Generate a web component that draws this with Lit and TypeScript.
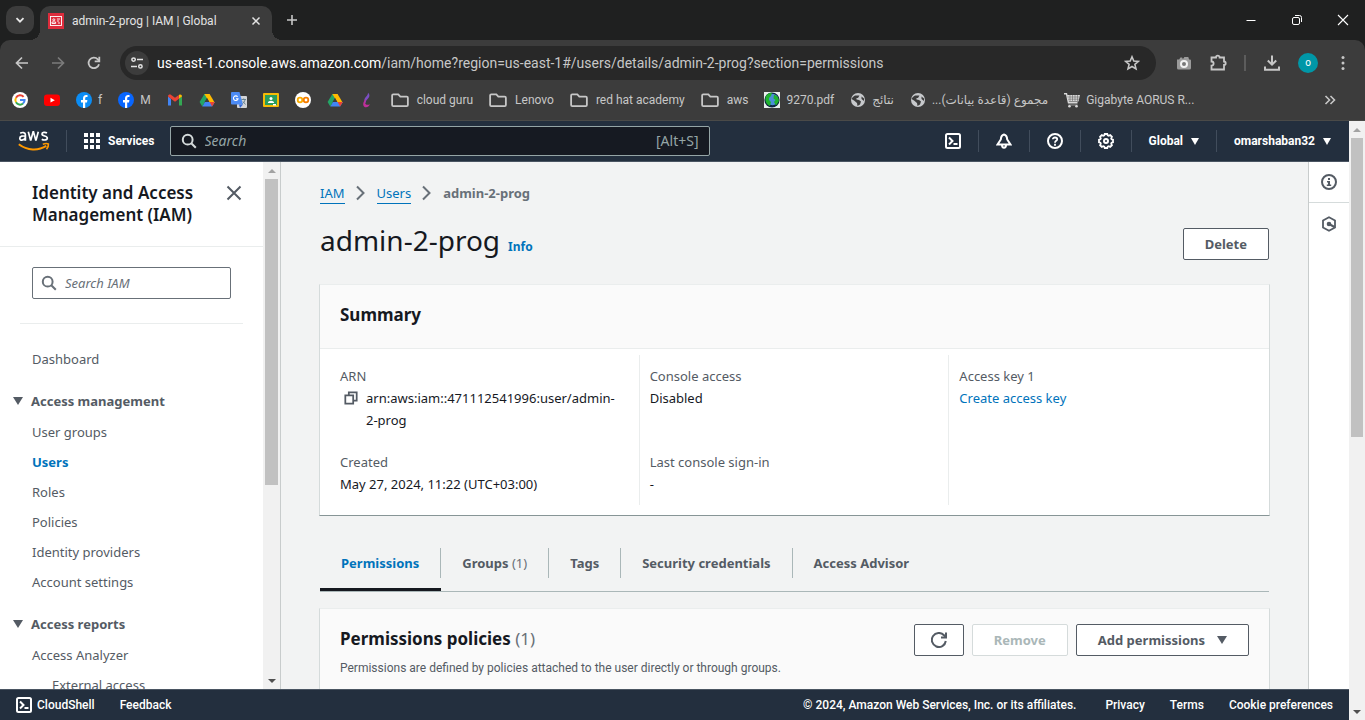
import { LitElement, html, svg, css, nothing } from "lit";
import { customElement, property } from "lit/decorators.js";

const shape = (content: unknown, size = 16, box = 16) =>
  html`<svg width=${size} height=${size} viewBox="0 0 ${box} ${box}" fill="none" aria-hidden="true">${content}</svg>`;

const line = (d: string, width = 2, color = "currentColor") =>
  svg`<path d=${d} stroke=${color} stroke-width=${width} fill="none"/>`;

const fill = (d: string, color = "currentColor") => svg`<path d=${d} fill=${color}/>`;

const icons = {
  chevronDown: () => shape(line("M4.5 6.2 8 9.7l3.5-3.5", 1.8)),
  close: () => shape(line("M4.5 4.5l7 7M11.5 4.5l-7 7", 1.5)),
  plus: () => shape(line("M8 3v10M3 8h10", 1.6)),
  minimize: () => shape(line("M3.5 8.5h9", 1)),
  restore: () =>
    shape(svg`<rect x="3.5" y="5.5" width="7" height="7" rx="1.5" stroke="currentColor"/>${line("M6 3.5h4.5a2 2 0 0 1 2 2V10", 1)}`),
  windowClose: () => shape(line("M3 3l10 10M13 3L3 13", 1.1)),
  back: () => shape(line("M14 8H3M8 2.5 2.5 8 8 13.5", 1.7)),
  forward: () => shape(line("M2 8h11M8 2.5 13.5 8 8 13.5", 1.7)),
  reload: () => shape(svg`${line("M13 9.2A5.3 5.3 0 1 1 11.8 4.3L13.2 5.8", 1.8)}${line("M13.3 1.8v4.6H8.7", 1.8)}`),
  tune: () =>
    shape(svg`<circle cx="4.6" cy="4.6" r="1.7" stroke="currentColor" stroke-width="1.5"/><circle cx="11.4" cy="11.4" r="1.7" stroke="currentColor" stroke-width="1.5"/>${line("M8 4.6h6M2 11.4h6", 1.5)}`),
  star: () => shape(line("M8 1.8 9.8 6l4.6.4-3.5 3 1.1 4.5L8 11.5l-4 2.4 1.1-4.5-3.5-3L6.200 6z", 1.6)),
  camera: () =>
    shape(svg`<path d="M1 4.500h2.200L4.400 2.500h1.800v1h1.300l.8-1.500h4l.8 2.500H14a1 1 0 0 1 1 1V13a1.500 1.500 0 0 1-1.500 1.500h-11A1.500 1.500 0 0 1 1 13z" fill="#9b9b9b"/><circle cx="8" cy="9" r="3" stroke="#f1f1f1" stroke-width="2" fill="#777"/>`),
  puzzle: () =>
    shape(line("M2.500 3.500H7a1.800 1.800 0 0 1 3.600 0H15v4a1.500 1.500 0 0 1 0 3.400V15.500H2.500v-3.800a2.100 2.100 0 0 0 0-4.200z", 1.8), 18, 18),
  download: () => shape(svg`${line("M9 1.500v9M4.800 6.500 9 10.700l4.200-4.200", 2)}${line("M2 12.500v3.300h14v-3.300", 2)}`, 18, 18),
  dots: () => shape(svg`<circle cx="8" cy="2.500" r="1.500" fill="currentColor"/><circle cx="8" cy="8" r="1.500" fill="currentColor"/><circle cx="8" cy="13.500" r="1.500" fill="currentColor"/>`),
  more: () => shape(line("M3.500 4l4 4-4 4M8.500 4l4 4-4 4", 1.6)),
  iam: () =>
    shape(svg`<rect width="16" height="16" fill="#dd2c3c"/><rect x="2.500" y="3.500" width="11" height="9" stroke="#fff" stroke-width=".9"/><circle cx="5.800" cy="6.800" r="1" stroke="#fff" stroke-width=".9"/><path d="M4 10.500V9h3.600v1.500zM9 6h3M9 8h2M10 10h2" stroke="#fff" stroke-width=".9"/>`),
  google: () =>
    shape(svg`<circle cx="8" cy="8" r="8" fill="#fff"/>${line("M11.600 4.900A4.600 4.600 0 0 0 4 5.700", 2, "#ea4335")}${line("M4 5.700a4.600 4.600 0 0 0 0 4.600", 2, "#fbbc05")}${line("M4 10.300a4.600 4.600 0 0 0 7 1.200", 2, "#34a853")}${line("M8 8h4.600a4.600 4.600 0 0 1-1.600 3.500", 2, "#4285f4")}`),
  youtube: () => shape(svg`<rect y="2.500" width="16" height="11.500" rx="3" fill="#f00"/>${fill("M6.500 5.800 10.800 8.200 6.500 10.600z", "#fff")}`),
  facebook: (color: string) =>
    shape(svg`<circle cx="8" cy="8" r="8" fill=${color}/>${fill("M7 16v-5.500H5V8h2V6.500C7 4.200 8.200 3 10.200 3c.7 0 1.300.1 1.300.1v2h-1c-1 0-1.300.6-1.300 1.300V8h2.200l-.4 2.500H9.200V16z", "#fff")}`),
  gmail: () =>
    shape(svg`${fill("M1 13.500V4.500l3 2.300v6.700z", "#4285f4")}${fill("M12 13.500V6.800l3-2.300v9z", "#34a853")}${fill("M1 4.500C1 2.500 3 2 4.200 3L8 5.800 11.800 3 12 6.800 8 9.800 1 4.600z", "#ea4335")}${fill("M12 6.800V2.900c1.500-.9 3-.2 3 1.600z", "#fbbc04")}`),
  drive: () =>
    shape(svg`${fill("M5.400 2h5.200L6 10 3.300 14.500.6 10z", "#23a566")}${fill("M5.400 2h5.200l5 8.500h-5.200z", "#ffba00")}${fill("M3.300 14.500 6 10h9.800l-2.700 4.500z", "#4285f4")}${fill("M13.100 14.500 10.600 10h5.200z", "#ea4335")}${fill("M8 5.800 10.400 10H5.600z", "#3c3c3c")}`),
  translate: () =>
    shape(svg`<rect x="6" y="4" width="10" height="12" rx="1" fill="#d3d5d8"/>${fill("M0 1a1 1 0 0 1 1-1h7.500l3.500 12.500H1a1 1 0 0 1-1-1z", "#4c8bf5")}${fill("M8 12.500h4L9 16z", "#3367d6")}${line("M6.600 4.800a2.300 2.300 0 1 0 .4 2H5", 1.1, "#fff")}${line("M10.500 7.500h4.500M12.700 6.500v1M14 7.500c-.2 2-1.500 3.500-2.500 4M12 9.500l2.500 3", .9, "#607d8b")}`),
  classroom: () =>
    shape(svg`<rect y="1" width="16" height="14" rx="1" fill="#f6bb06"/><rect x="2" y="3" width="12" height="10" fill="#2a9d5c"/><circle cx="8" cy="6.500" r="1.500" fill="#fff"/>${fill("M4.800 11c.4-3 6-3 6.400 0zM10 12h3v1.500h-3z", "#fff")}`),
  colab: () =>
    shape(svg`<circle cx="8" cy="8" r="8" fill="#fff"/><circle cx="5" cy="8" r="2.300" stroke="#f9ab00" stroke-width="1.800"/><circle cx="11" cy="8" r="2.300" stroke="#f57c00" stroke-width="1.800"/>`),
  plume: () => shape(svg`${fill("M9 .8c2.200 2 1.600 4.300-.4 6.200C7.200 8.500 6.500 9.500 7 11 4.500 9.500 5.200 6.800 6.800 5 8.200 3.600 9 2.600 9 .8z", "#7b4fc4")}${fill("M7.500 7C4 8.500 3 14 6 15.200c2 .6 3.800-.5 5-2.900-2.200.9-4.300.7-4.700-1C6 10 6.800 8.800 7.500 7z", "#c02f9a")}`),
  folder: () => shape(line("M2 3h4.500l1.800 2H14a1 1 0 0 1 1 1v6.500a1 1 0 0 1-1 1H2a1 1 0 0 1-1-1V4a1 1 0 0 1 1-1z", 1.6), 18),
  earth: () =>
    shape(svg`<rect width="16" height="16" fill="#e8f0ee"/><circle cx="8" cy="8" r="7.600" fill="#0d2440"/><circle cx="8.500" cy="7.500" r="5.800" fill="#4a8fd8"/>${fill("M2 4c2-3 5-3.500 6-3L7 4 5 6v2l2 2-1 4C3 13 0 9 2 4zM10 2.500l4 2.500 1 4-3 4.500-2-3.500 1.500-2-2-1.500z", "#1fb32f")}`),
  globe: () =>
    shape(svg`<circle cx="8" cy="8" r="7" fill="#c7c9cc"/>${fill("M5 3.500h4.500L8 6H6.500v1.500L9 8l2 1.500-1 3L7.500 14l-.5-3L4 8.500 1.500 7A6.500 6.500 0 0 1 5 3.500zM11.500 4.500l2.500 2V9l-2.500-2z", "#3c3c3c")}`),
  cart: () =>
    shape(svg`${line("M0 1.800h2.500l2 9h9", 1.4, "#d9d9d9")}${fill("M3 3h13l-1.500 6.500H4.500z", "#d9d9d9")}${line("M6 3v6M8.500 3v6M11 3v6M13.500 3v6M3.500 5h12M4 7.200h11", .5, "#555")}${line("M4.500 13h9", 1, "#999")}<circle cx="5.500" cy="14.300" r="1.300" fill="#d9d9d9"/><circle cx="12.500" cy="14.300" r="1.300" fill="#d9d9d9"/>`),
  aws: () => html`<svg width="32" height="22" viewBox="0 0 32 22" fill="none" aria-hidden="true">
    <path d="M2.200 3.200c2-1.200 5.200-.9 5.200 1.500v6M7.200 6.300c-2-.6-5.400-.4-5.400 2 0 2.500 4 2.600 5.400-.4M10.300 1.800l2.200 8.200h.4l2.200-8.200h.4l2.200 8.200h.4l2.200-8.200M29 3c-1.800-1-5-.9-5 1.100 0 2.500 5.300 1.300 5.300 3.900 0 2.400-3.800 2.400-5.500 1.200" stroke="#fff" stroke-width="1.700"/>
    <path d="M.8 14.200c8.500 6.500 19.500 6.800 27.500 1.700" stroke="#f90" stroke-width="2"/>
    <path d="M24.800 14.200c2.500-.9 4.500-.9 5.600-.2.200 1.500-.4 3.500-1.900 5.300" stroke="#f90" stroke-width="1.600"/>
  </svg>`,
  apps: () =>
    shape([1, 7, 13].map((y) => [1, 7, 13].map((x) => svg`<rect x=${x - 1} y=${y - 1} width="4" height="4" fill="currentColor"/>`))),
  search: () => shape(svg`<circle cx="6.700" cy="6.700" r="4.900" stroke="currentColor" stroke-width="2"/>${line("M10.300 10.300l4.500 4.500")}`),
  shell: () => shape(svg`<rect x="1" y="1" width="14" height="14" rx="1.500" stroke="currentColor" stroke-width="2"/>${line("M4 4.500 7.500 8 4 11.500M8.500 11h4")}`),
  bell: () => shape(svg`${line("M8 1.500C5.500 2 5 4 4.800 6.500L1.500 11.500h13L11.200 6.500C11 4 10.500 2 8 1.500z")}${line("M6 12c0 3.500 4 3.500 4 0")}`),
  help: () => shape(svg`<circle cx="8" cy="8" r="7" stroke="currentColor" stroke-width="2"/>${line("M5.800 6.300C5.800 3.800 10.200 4 10.200 6.300 10.200 8 8 7.700 8 9.800M8 10.800v2", 1.8)}`),
  gear: () =>
    shape(svg`${line("M6.700 1h2.600l.4 1.400 1 .4 1.500-.7 1.700 1.700-.7 1.500.4 1L15 6.700v2.600l-1.400.4-.4 1 .7 1.500-1.700 1.700-1.500-.7-1 .4L9.300 15H6.700l-.4-1.400-1-.4-1.500.7-1.700-1.700.7-1.500-.4-1L1 9.300V6.700l1.400-.4.4-1-.7-1.500 1.700-1.700 1.500.7 1-.4z", 1.800)}<circle cx="8" cy="8" r="2" stroke="currentColor" stroke-width="2"/>`),
  info: () => shape(svg`<circle cx="8" cy="8" r="7" stroke="currentColor" stroke-width="2"/>${fill("M7 4h2v2H7zM6 7h3v3.500h1.200V12H5.800v-1.500H7v-2H6z")}`),
  hexagon: () => shape(svg`${line("M8 1.200 14 4.500v7L8 14.800 2 11.500v-7z", 1.8)}<circle cx="8" cy="8" r="2.300" fill="currentColor"/>${line("M8 8l5.500 3")}`),
  bigClose: () => shape(line("M1.500 1.500l13 13M14.500 1.500l-13 13")),
  angle: () => shape(line("M4 1.500 10.500 8 4 14.500")),
  caret: () => shape(fill("M0 1h10L5 9z"), 10, 10),
  smallCaret: () => shape(fill("M0 1h8L4 8z"), 8, 8),
  copy: () => shape(line("M1.500 5h9v9.500h-9zM5.500 5V1.500h9V11h-4")),
  refresh: () => shape(svg`${line("M14.800 9A7 7 0 1 1 13 3.200L14.500 4.800")}${line("M15 .5v5h-5")}`),
  up: () => shape(fill("M4 10h8L8 6z"), 16),
  down: () => shape(fill("M4 6h8l-4 4z"), 16),
};

const reset = css`
  *, *::before, *::after { box-sizing: border-box; }
  svg { display: block; flex: none; }
  button { font: inherit; color: inherit; background: none; border: 0; padding: 0; margin: 0; }
  a { color: inherit; text-decoration: none; }
  input { font: inherit; color: inherit; background: none; border: 0; padding: 0; min-width: 0; outline: none; }
`;

@customElement("scroll-track")
class ScrollTrack extends LitElement {
  @property({ type: Number }) size = 50;
  static styles = [reset, css`
    :host { display: flex; flex: none; flex-direction: column; width: 16px; background: #f1f1f1; }
    .arrow { display: flex; align-items: center; justify-content: center; height: 17px; flex: none; color: #a3a3a3; }
    .arrow.down { color: #505050; }
    .rail { flex: 1; padding: 0 2px; }
    .thumb { background: #c1c1c1; }
  `];
  render() {
    return html`
      <div class="arrow">${icons.up()}</div>
      <div class="rail"><div class="thumb" style="height:${this.size}%"></div></div>
      <div class="arrow down">${icons.down()}</div>`;
  }
}

interface Mark { icon: () => unknown; text?: string; rtl?: boolean; folder?: boolean; }
const marks: Mark[] = [
  { icon: icons.google },
  { icon: icons.youtube },
  { icon: () => icons.facebook("#0b8df5"), text: "f" },
  { icon: () => icons.facebook("#0866ff"), text: "M" },
  { icon: icons.gmail },
  { icon: icons.drive },
  { icon: icons.translate },
  { icon: icons.classroom },
  { icon: icons.colab },
  { icon: icons.drive },
  { icon: icons.plume },
  { icon: icons.folder, text: "cloud guru", folder: true },
  { icon: icons.folder, text: "Lenovo", folder: true },
  { icon: icons.folder, text: "red hat academy", folder: true },
  { icon: icons.folder, text: "aws", folder: true },
  { icon: icons.earth, text: "9270.pdf" },
  { icon: icons.globe, text: "نتائج", rtl: true },
  { icon: icons.globe, text: "مجموع (قاعدة بيانات)...", rtl: true },
  { icon: icons.cart, text: "Gigabyte AORUS R..." },
];

@customElement("browser-frame")
class BrowserFrame extends LitElement {
  static styles = [reset, css`
    :host { display: block; flex: none; background: #1f2020; color: #c7c7c7; font: 12px/16px Roboto, "DejaVu Sans", sans-serif; }
    .strip { display: flex; align-items: center; height: 40px; padding: 0 6px; gap: 6px; }
    .tabs-menu { display: grid; place-items: center; width: 28px; height: 28px; border-radius: 10px; background: #3c3c3c; color: #e8e8e8; }
    .tab { position: relative; display: flex; align-items: center; gap: 8px; align-self: flex-end; width: 232px; height: 34px; padding: 0 8px 4px; border-radius: 10px 10px 0 0; background: #3c3c3c; color: #e3e3e3; }
    .tab::before, .tab::after { content: ""; position: absolute; bottom: 0; width: 10px; height: 10px; }
    .tab::before { right: 100%; background: radial-gradient(circle at 0 0, transparent 10px, #3c3c3c 10px); }
    .tab::after { left: 100%; background: radial-gradient(circle at 100% 0, transparent 10px, #3c3c3c 10px); }
    .tab-title { flex: 1; white-space: nowrap; }
    .new-tab { margin-left: 6px; }
    .window { display: flex; gap: 30px; margin-left: auto; padding-right: 8px; color: #fff; }
    .toolbar { display: flex; align-items: center; height: 46px; padding: 0 14px; background: #3c3c3c; border-radius: 10px 10px 0 0; }
    .nav { display: flex; gap: 20px; padding-right: 18px; }
    .nav .off { color: #7b7b7b; }
    .omnibox { display: flex; flex: 1; align-items: center; gap: 8px; height: 34px; padding: 0 16px 0 5px; border-radius: 17px; background: #282828; }
    .site { display: grid; place-items: center; width: 24px; height: 24px; border-radius: 12px; background: #3c3c3c; color: #e3e3e3; }
    .url { flex: 1; font-size: 14px; line-height: 18px; white-space: nowrap; overflow: hidden; color: #c7c7c7; }
    .host { color: #fff; }
    .tools { display: flex; align-items: center; gap: 17px; padding-left: 20px; }
    .rule { width: 2px; height: 16px; background: #5c5c5c; }
    .avatar { display: grid; place-items: center; width: 20px; height: 20px; border-radius: 10px; background: #0097a7; color: #fff; font-size: 10px; }
    .marks { display: flex; align-items: center; gap: 16px; height: 35px; padding: 0 27px 6px 12px; background: #3c3c3c; border-bottom: 1px solid #4a4a48; }
    .mark { display: flex; align-items: center; gap: 6px; white-space: nowrap; }
    .mark.folder { gap: 8px; }
    .more { margin-left: auto; }
  `];
  render() {
    return html`
      <div class="strip">
        <button class="tabs-menu" aria-label="Search tabs">${icons.chevronDown()}</button>
        <div class="tab">${icons.iam()}<span class="tab-title">admin-2-prog | IAM | Global</span>
          <button aria-label="Close tab">${icons.close()}</button></div>
        <button class="new-tab" aria-label="New tab">${icons.plus()}</button>
        <div class="window">
          <button aria-label="Minimize">${icons.minimize()}</button>
          <button aria-label="Restore">${icons.restore()}</button>
          <button aria-label="Close window">${icons.windowClose()}</button>
        </div>
      </div>
      <div class="toolbar">
        <div class="nav">
          <button aria-label="Back">${icons.back()}</button>
          <button class="off" aria-label="Forward">${icons.forward()}</button>
          <button aria-label="Reload">${icons.reload()}</button>
        </div>
        <div class="omnibox">
          <button class="site" aria-label="Site information">${icons.tune()}</button>
          <div class="url"><span class="host">us-east-1.console.aws.amazon.com</span>/iam/home?region=us-east-1#/users/details/admin-2-prog?section=permissions</div>
          <button aria-label="Bookmark this page">${icons.star()}</button>
        </div>
        <div class="tools">
          <button aria-label="Capture">${icons.camera()}</button>
          <button aria-label="Extensions">${icons.puzzle()}</button>
          <span class="rule"></span>
          <button aria-label="Downloads">${icons.download()}</button>
          <button class="avatar" aria-label="Profile">o</button>
          <button aria-label="Menu">${icons.dots()}</button>
        </div>
      </div>
      <div class="marks">
        ${marks.map((m) => html`<a class=${m.folder ? "mark folder" : "mark"} href="#">${m.icon()}${m.text ? html`<span dir=${m.rtl ? "rtl" : "ltr"}>${m.text}</span>` : nothing}</a>`)}
        <button class="more" aria-label="More bookmarks">${icons.more()}</button>
      </div>`;
  }
}

@customElement("console-header")
class ConsoleHeader extends LitElement {
  static styles = [reset, css`
    :host { display: flex; flex: none; align-items: center; height: 41px; padding: 0 18px; background: #232f3e; border-bottom: 1px solid #4a5562; color: #fff; font-size: 12px; line-height: 16px; }
    .bold { font-family: Roboto, sans-serif; font-weight: 700; }
    .rule { width: 1px; height: 22px; background: #414d5c; }
    .logo { margin-right: 16px; }
    .services { display: flex; align-items: center; gap: 8px; margin: 0 15px 0 17px; }
    .search { display: flex; align-items: center; gap: 8px; width: 540px; height: 30px; padding: 0 10px; border: 1px solid #95a5a6; border-radius: 2px; background: #161a22; font-size: 14px; color: #95a5a6; }
    .search svg { color: #d5dbdb; }
    .search input { flex: 1; }
    .search input::placeholder { color: #95a5a6; font-style: italic; opacity: 1; }
    .actions { display: flex; align-items: center; margin-left: auto; gap: 17px; }
    .pick { display: flex; align-items: center; gap: 8px; }
  `];
  render() {
    return html`
      <a class="logo" href="#" aria-label="AWS home">${icons.aws()}</a>
      <span class="rule"></span>
      <button class="services bold">${icons.apps()}Services</button>
      <label class="search">${icons.search()}<input type="text" placeholder="Search" aria-label="Search"><span>[Alt+S]</span></label>
      <div class="actions bold">
        <button aria-label="CloudShell">${icons.shell()}</button><span class="rule"></span>
        <button aria-label="Notifications">${icons.bell()}</button><span class="rule"></span>
        <button aria-label="Help">${icons.help()}</button><span class="rule"></span>
        <button aria-label="Settings">${icons.gear()}</button><span class="rule"></span>
        <button class="pick">Global ${icons.smallCaret()}</button><span class="rule"></span>
        <button class="pick">omarshaban32 ${icons.smallCaret()}</button>
      </div>`;
  }
}

@customElement("side-nav")
class SideNav extends LitElement {
  static styles = [reset, css`
    :host { display: flex; flex: none; width: 281px; border-right: 1px solid #c8cccc; background: #fff; color: #545b64; }
    .panel { flex: 1; overflow: hidden; }
    scroll-track { width: 17px; }
    .head { display: flex; align-items: flex-start; justify-content: space-between; padding: 20px 21px 20px 32px; border-bottom: 1px solid #eaeded; }
    h2 { margin: 0; color: #16191f; font-size: 17px; line-height: 22px; font-weight: 600; }
    .head button { padding-top: 3px; }
    .find { display: flex; align-items: center; gap: 8px; height: 32px; margin: 20px 32px 24px; padding: 0 8px; border: 1px solid #687078; border-radius: 2px; color: #687078; }
    .find input { flex: 1; }
    .find input::placeholder { color: #687078; font-style: italic; opacity: 1; }
    hr { margin: 0 20px 24px; border: 0; border-top: 1px solid #eaeded; }
    ul { margin: 0; padding: 0 32px; list-style: none; }
    li { display: flow-root; }
    a { display: block; margin-bottom: 8px; }
    .on { color: #0073bb; font-weight: 700; }
    .group { display: flex; align-items: center; gap: 8px; margin: 12px 0 9px 13px; font-weight: 700; }
    .sub { padding-left: 20px; }
  `];
  render() {
    return html`
      <nav class="panel">
        <div class="head"><h2>Identity and Access<br>Management (IAM)</h2><button aria-label="Close navigation">${icons.bigClose()}</button></div>
        <label class="find">${icons.search()}<input type="text" placeholder="Search IAM" aria-label="Search IAM"></label>
        <hr>
        <ul><li><a href="#">Dashboard</a></li></ul>
        <button class="group">${icons.caret()}Access management</button>
        <ul>
          ${["User groups", "Users", "Roles", "Policies", "Identity providers", "Account settings"].map(
            (t) => html`<li><a class=${t === "Users" ? "on" : ""} href="#">${t}</a></li>`)}
        </ul>
        <button class="group">${icons.caret()}Access reports</button>
        <ul>
          <li><a href="#">Access Analyzer</a></li>
          <li><a class="sub" href="#">External access</a></li>
        </ul>
      </nav>
      <scroll-track .size=${62}></scroll-track>`;
  }
}

@customElement("user-details")
class UserDetails extends LitElement {
  static styles = [reset, css`
    :host { display: block; flex: 1; min-width: 0; overflow: hidden; padding: 20px 39px 0; background: #f2f3f3; color: #16191f; }
    a { color: #0073bb; }
    .crumbs { display: flex; align-items: center; gap: 8px; height: 22px; color: #687078; }
    .crumbs a { border-bottom: 1px solid #0073bb; line-height: 20px; }
    .crumbs b { font-weight: 700; }
    .title { display: flex; align-items: flex-start; justify-content: space-between; height: 34px; margin: 22px 0 24px; }
    .title .btn { align-self: flex-end; }
    .name { display: flex; align-items: baseline; gap: 8px; }
    h1 { margin: 0; font-size: 28px; line-height: 28px; font-weight: 400; }
    .info { font-size: 12px; line-height: 20px; font-weight: 700; }
    .btn { display: flex; align-items: center; gap: 12px; height: 32px; padding: 0 21px; border: 1px solid #545b64; border-radius: 2px; background: #fff; color: #545b64; font-weight: 700; white-space: nowrap; }
    .btn.icon { padding: 0 16px; }
    .btn:disabled { border-color: #d5dbdb; color: #aab7b8; }
    .card { border: 1px solid #d5dbdb; border-top-color: #eaeded; border-bottom-color: #879596; background: #fff; margin: 0 -1px; }
    h2 { margin: 0; font-size: 17px; line-height: 22px; font-weight: 700; }
    .card-head { padding: 19px 20px 22px; background: #fafafa; border-bottom: 1px solid #eaeded; }
    .facts { display: grid; grid-template-columns: repeat(3, minmax(0, 1fr)); grid-template-rows: auto auto; padding: 6px 11px 10px 9px; }
    .col { display: grid; grid-row: span 2; grid-template-rows: subgrid; row-gap: 20px; padding: 10px 10px 10px 11px; }
    .col + .col { padding-left: 10px; border-left: 1px solid #eaeded; }
    dl, dd { margin: 0; }
    dt { color: #545b64; }
    .arn { display: flex; gap: 8px; }
    .arn button { padding: 3px 0 3px 4px; align-self: flex-start; color: #545b64; }
    .arn svg { width: 14px; height: 16px; }
    .keep { white-space: nowrap; }
    .tabs { display: flex; align-items: center; margin-top: 19px; border-bottom: 1px solid #aab7b8; color: #545b64; font-weight: 700; }
    .tab { height: 56px; border-bottom: 3px solid transparent; padding: 3px 0 0; }
    .tab span { display: block; height: 30px; padding: 4px 21px; border-right: 1px solid #aab7b8; line-height: 22px; }
    .tab:last-child span { border: 0; }
    .tab i, h2 i { font-style: normal; font-weight: 400; color: #687078; }
    .tab.on { border-color: #16191f; color: #0073bb; }
    .tabs + .card { margin-top: 16px; }
    .policies { display: flex; align-items: flex-start; justify-content: space-between; height: 180px; padding: 15px 20px; background: #fafafa; }
    .policies h2 { padding: 4px 0; }
    .policies p { margin: 4px 0 0; font-family: Roboto, sans-serif; font-size: 12px; line-height: 20px; color: #545b64; }
    .buttons { display: flex; gap: 8px; }
  `];
  render() {
    return html`
      <nav class="crumbs"><a href="#">IAM</a>${icons.angle()}<a href="#">Users</a>${icons.angle()}<b>admin-2-prog</b></nav>
      <div class="title">
        <div class="name"><h1>admin-2-prog</h1><a class="info" href="#">Info</a></div>
        <button class="btn">Delete</button>
      </div>
      <section class="card">
        <div class="card-head"><h2>Summary</h2></div>
        <div class="facts">
          <div class="col">
            <dl><dt>ARN</dt><dd class="arn"><button aria-label="Copy ARN">${icons.copy()}</button><span>arn:aws:iam::471112541996:user/admin-<span class="keep">2-prog</span></span></dd></dl>
            <dl><dt>Created</dt><dd>May 27, 2024, 11:22 (UTC+03:00)</dd></dl>
          </div>
          <div class="col">
            <dl><dt>Console access</dt><dd>Disabled</dd></dl>
            <dl><dt>Last console sign-in</dt><dd>-</dd></dl>
          </div>
          <div class="col">
            <dl><dt>Access key 1</dt><dd><a href="#">Create access key</a></dd></dl>
          </div>
        </div>
      </section>
      <div class="tabs" role="tablist">
        <button class="tab on" role="tab"><span>Permissions</span></button>
        <button class="tab" role="tab"><span>Groups <i>(1)</i></span></button>
        <button class="tab" role="tab"><span>Tags</span></button>
        <button class="tab" role="tab"><span>Security credentials</span></button>
        <button class="tab" role="tab"><span>Access Advisor</span></button>
      </div>
      <section class="card">
        <div class="policies">
          <div><h2>Permissions policies <i>(1)</i></h2><p>Permissions are defined by policies attached to the user directly or through groups.</p></div>
          <div class="buttons">
            <button class="btn icon" aria-label="Refresh">${icons.refresh()}</button>
            <button class="btn" disabled>Remove</button>
            <button class="btn">Add permissions ${icons.caret()}</button>
          </div>
        </div>
      </section>`;
  }
}

@customElement("app-root")
class AppRoot extends LitElement {
  static styles = [reset, css`
    :host { display: flex; flex-direction: column; height: 100vh; overflow: hidden; font: 13px/22px "Noto Sans", "Open Sans", sans-serif; }
    .view { display: flex; flex: 1; min-height: 0; }
    .page { display: flex; flex: 1; flex-direction: column; min-width: 0; }
    .body { display: flex; flex: 1; min-height: 0; }
    .rail { flex: none; width: 41px; border-left: 1px solid #c8cccc; background: #fff; color: #545b64; }
    .rail button { display: grid; place-items: center; width: 100%; height: 41px; }
    .rail button:first-child { border-bottom: 1px solid #d5dbdb; }
    footer { display: flex; flex: none; align-items: center; gap: 25px; height: 31px; padding: 0 16px; background: #232f3e; border-top: 1px solid #4a5562; color: #fff; font: 500 12px/16px Roboto, sans-serif; white-space: nowrap; }
    .shell { display: flex; align-items: center; gap: 5px; }
    .legal { margin-left: auto; padding-right: 4px; }
  `];
  render() {
    return html`
      <browser-frame></browser-frame>
      <div class="view">
        <div class="page">
          <console-header></console-header>
          <div class="body">
            <side-nav></side-nav>
            <user-details></user-details>
            <aside class="rail">
              <button aria-label="Info panel">${icons.info()}</button>
              <button aria-label="Tools panel">${icons.hexagon()}</button>
            </aside>
          </div>
          <footer>
            <a class="shell" href="#">${icons.shell()}CloudShell</a>
            <a href="#">Feedback</a>
            <span class="legal">© 2024, Amazon Web Services, Inc. or its affiliates.</span>
            <a href="#">Privacy</a><a href="#">Terms</a><a href="#">Cookie preferences</a>
          </footer>
        </div>
        <scroll-track .size=${53}></scroll-track>
      </div>`;
  }
}
